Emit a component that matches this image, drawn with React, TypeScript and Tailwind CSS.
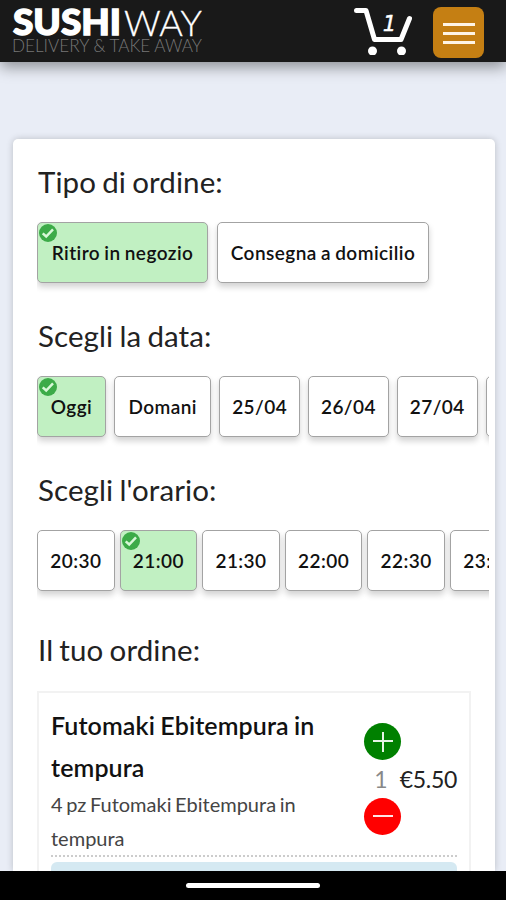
import { useState } from 'react';
import clsx from 'clsx';

type Option = { label: string; width: string };

const orderTypes: Option[] = [
  { label: 'Ritiro in negozio', width: 'w-[171px]' },
  { label: 'Consegna a domicilio', width: 'w-[212px]' },
];

const dates: Option[] = [
  { label: 'Oggi', width: 'w-[69px]' },
  { label: 'Domani', width: 'w-[97px]' },
  { label: '25/04', width: 'w-[80.6px]' },
  { label: '26/04', width: 'w-[80.6px]' },
  { label: '27/04', width: 'w-[80.6px]' },
  { label: '28/04', width: 'w-[80.6px]' },
];

const times: Option[] = [
  { label: '20:30', width: 'w-[77.6px]' },
  { label: '21:00', width: 'w-[77.6px]' },
  { label: '21:30', width: 'w-[77.6px]' },
  { label: '22:00', width: 'w-[77.6px]' },
  { label: '22:30', width: 'w-[77.6px]' },
  { label: '23:00', width: 'w-[77.6px]' },
];

function Logo() {
  return (
    <svg width="194" height="56" viewBox="0 0 194 56" className="shrink-0">
      <g fill="#fff" stroke="#fff" fontFamily="Lato, sans-serif" fontSize="36">
        <text x="1" y="35" fontWeight="900" strokeWidth="1.4" textLength="108" lengthAdjust="spacingAndGlyphs">SUSHI</text>
        <text x="112" y="35.5" fontWeight="300" strokeWidth="0.3" textLength="78" lengthAdjust="spacingAndGlyphs">WAY</text>
      </g>
      <text x="0" y="51.5" fill="#777" fontFamily="Lato, sans-serif" fontSize="17" fontWeight="300" textLength="190" lengthAdjust="spacingAndGlyphs">
        DELIVERY &amp; TAKE AWAY
      </text>
    </svg>
  );
}

function CartIcon() {
  return (
    <svg width="58" height="48" viewBox="0 0 58 48" fill="none" stroke="#fff" strokeWidth="5" strokeLinecap="round" strokeLinejoin="round">
      <path d="M2.5 3.5H12L20.5 32.5H47L55.5 11.5" />
      <circle cx="18.5" cy="44" r="4.5" fill="#fff" stroke="none" />
      <circle cx="47.5" cy="44" r="4.5" fill="#fff" stroke="none" />
      <text x="28.5" y="23.5" fill="#fff" stroke="#fff" strokeWidth="0.4" fontFamily="'DejaVu Sans Mono', monospace" fontStyle="italic" fontWeight="400" fontSize="22">1</text>
    </svg>
  );
}

function CheckBadge() {
  return (
    <svg width="18" height="18" viewBox="0 0 18 18" className="absolute top-px left-px">
      <circle cx="9" cy="9" r="9" fill="#3cab48" />
      <path d="M3.7 9.3L7.2 12.5L14 5.4" fill="none" stroke="#d8f8d8" strokeWidth="2.5" />
    </svg>
  );
}

function Chip({ option, selected, onClick }: { option: Option; selected: boolean; onClick: () => void }) {
  return (
    <button
      onClick={onClick}
      className={clsx(
        'relative h-[61px] shrink-0 rounded-[5px] border border-[#a3a3a3] pt-px text-[19px] font-semibold tracking-[0.45px] [word-spacing:-1px] whitespace-nowrap text-[#111] shadow-[0_4px_6px_rgba(0,0,0,0.18)]',
        option.width,
        selected ? 'bg-[#c1f0c2]' : 'bg-white'
      )}
    >
      {selected && <CheckBadge />}
      {option.label}
    </button>
  );
}

function ChipRow({ options, initial, className }: { options: Option[]; initial: string; className: string }) {
  const [selected, setSelected] = useState(initial);

  return (
    <div className={clsx('flex h-[76px] overflow-hidden', className)}>
      {options.map((option) => (
        <Chip key={option.label} option={option} selected={option.label === selected} onClick={() => setSelected(option.label)} />
      ))}
    </div>
  );
}

function Heading({ children }: { children: string }) {
  return <h2 className="h-10 pl-px text-[29.5px] leading-[38px] font-normal tracking-[0.1px] [word-spacing:-1.5px] text-[#222]">{children}</h2>;
}

export default function App() {
  return (
    <div className="flex h-[900px] w-full flex-col overflow-hidden bg-[#e9edf6] font-[Lato,sans-serif] text-[#222]">
      {/* Top bar */}
      <header className="z-10 flex h-[62px] shrink-0 items-start bg-[#191919] pl-3 shadow-[0_5px_14px_rgba(0,0,0,0.4)]">
        <Logo />
        <div className="mt-[7px] ml-auto">
          <CartIcon />
        </div>
        <button aria-label="Menu" className="mt-[7px] mr-[22px] ml-[21px] flex h-[51px] w-[51px] flex-col items-center justify-center gap-[6px] rounded-lg bg-[#c57f13] pt-px">
          <span className="h-[3px] w-8 bg-[#fff4e4]" />
          <span className="h-[3px] w-8 bg-[#fff4e4]" />
          <span className="h-[3px] w-8 bg-[#fff4e4]" />
        </button>
      </header>

      <main className="min-h-0 flex-1 overflow-hidden pt-[77px] pr-[11px] pl-[13px]">
        <section className="h-full rounded-t-[5px] bg-white pt-6 pl-6 shadow-[0_0_7px_rgba(0,0,0,0.2)]">
          <Heading>Tipo di ordine:</Heading>
          <ChipRow options={orderTypes} initial="Ritiro in negozio" className="mt-[19px] mr-[6px] gap-[9px]" />

          <div className="mt-[19px]">
            <Heading>Scegli la data:</Heading>
          </div>
          <ChipRow options={dates} initial="Oggi" className="mt-[19px] mr-[6px] gap-[8.2px]" />

          <div className="mt-[19px]">
            <Heading>Scegli l'orario:</Heading>
          </div>
          <ChipRow options={times} initial="21:00" className="mt-[19px] mr-[6px] gap-[5px]" />

          <div className="mt-[25px]">
            <Heading>Il tuo ordine:</Heading>
          </div>

          {/* Order summary */}
          <div className="mt-5 mr-6 h-[220px] border-2 border-[#f2f2f2] px-3 pt-[11px]">
            <div className="flex h-[153px] border-b-2 border-dotted border-[#ccc]">
              <div className="w-[290px]">
                <h3 className="text-[25px] leading-[42px] font-semibold tracking-[0.1px] [word-spacing:-1px] text-[#111]">Futomaki Ebitempura in<br />tempura</h3>
                <p className="-mt-px text-[20px] leading-[34px] [word-spacing:-1.5px] text-[#444]">4 pz Futomaki Ebitempura in<br />tempura</p>
              </div>
              <div className="ml-auto flex flex-col items-end">
                <button aria-label="Aggiungi" className="mt-[19px] mr-[56px] flex size-[37px] items-center justify-center rounded-full bg-[#008000]">
                  <svg width="20" height="20" viewBox="0 0 20 20" stroke="#e5f3e5" strokeWidth="2"><path d="M0 9H20M10 0V20" /></svg>
                </button>
                <div className="flex h-[38px] items-center gap-3 text-[23px]">
                  <span className="text-[#888]">1</span>
                  <span className="tracking-[-0.3px]">€5.50</span>
                </div>
                <button aria-label="Rimuovi" className="mr-[56px] flex size-[37px] items-center justify-center rounded-full bg-[#ff0000]">
                  <svg width="20" height="20" viewBox="0 0 20 20" stroke="#ffe5e5" strokeWidth="2"><path d="M0 9H20" /></svg>
                </button>
              </div>
            </div>
            <div className="mt-[5px] h-12 rounded-md bg-[#d5e9f2]" />
          </div>
        </section>
      </main>

      {/* System navigation bar */}
      <footer className="z-10 flex h-[29px] shrink-0 items-center justify-center bg-black">
        <div className="h-[5px] w-[134px] rounded-full bg-white" />
      </footer>
    </div>
  );
}
